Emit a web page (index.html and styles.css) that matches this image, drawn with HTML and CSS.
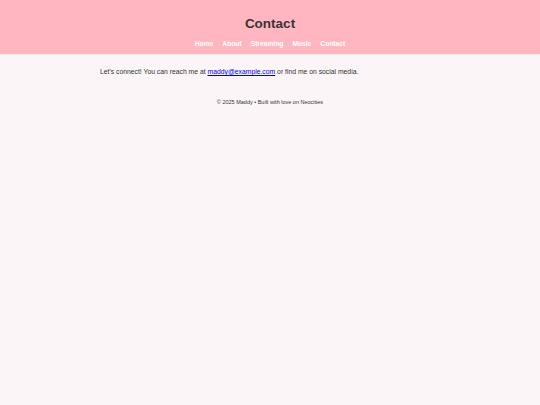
FILE: index.html
```html
<!DOCTYPE html>
<html>
<head>
<meta charset="utf-8">
<link rel="stylesheet" href="styles.css">
</head>
<body>
<header class="site-header">
  <h1 class="title">Contact</h1>
  <nav class="nav">
    <a href="#">Home</a>
    <a href="#">About</a>
    <a href="#">Streaming</a>
    <a href="#">Music</a>
    <a href="#">Contact</a>
  </nav>
</header>
<main class="content">
  <p class="text">Let's connect! You can reach me at <a href="#" class="mail">maddy@example.com</a> or find me on social media.</p>
</main>
<footer class="footer">© 2025 Maddy • Built with love on Neocities</footer>
</body>
</html>
```
FILE: styles.css
```css
html, body {
  margin: 0;
  padding: 0;
}
body {
  background: #fcf5f7;
  font-family: "Liberation Sans", Arial, sans-serif;
  color: #333;
  min-height: 405px;
}
.site-header {
  background: #ffb6c1;
  height: 54px;
  box-sizing: border-box;
  padding-top: 15px;
  text-align: center;
  box-shadow: 0 1px 2px rgba(0,0,0,0.06);
}
.title {
  margin: 0;
  font-size: 13.5px;
  line-height: 18px;
  color: #3a3336;
}
.nav {
  display: flex;
  justify-content: center;
  gap: 9px;
  margin-top: 4px;
}
.nav a {
  color: #fff;
  text-decoration: none;
  font-weight: bold;
  font-size: 6.7px;
  line-height: 14px;
}
.content {
  width: 340px;
  margin: 0 auto;
  padding-top: 12px;
}
.text {
  margin: 0;
  font-size: 6.8px;
  line-height: 12px;
}
.mail {
  color: #0000ee;
}
.footer {
  text-align: center;
  font-size: 5.5px;
  margin-top: 21px;
}
```
